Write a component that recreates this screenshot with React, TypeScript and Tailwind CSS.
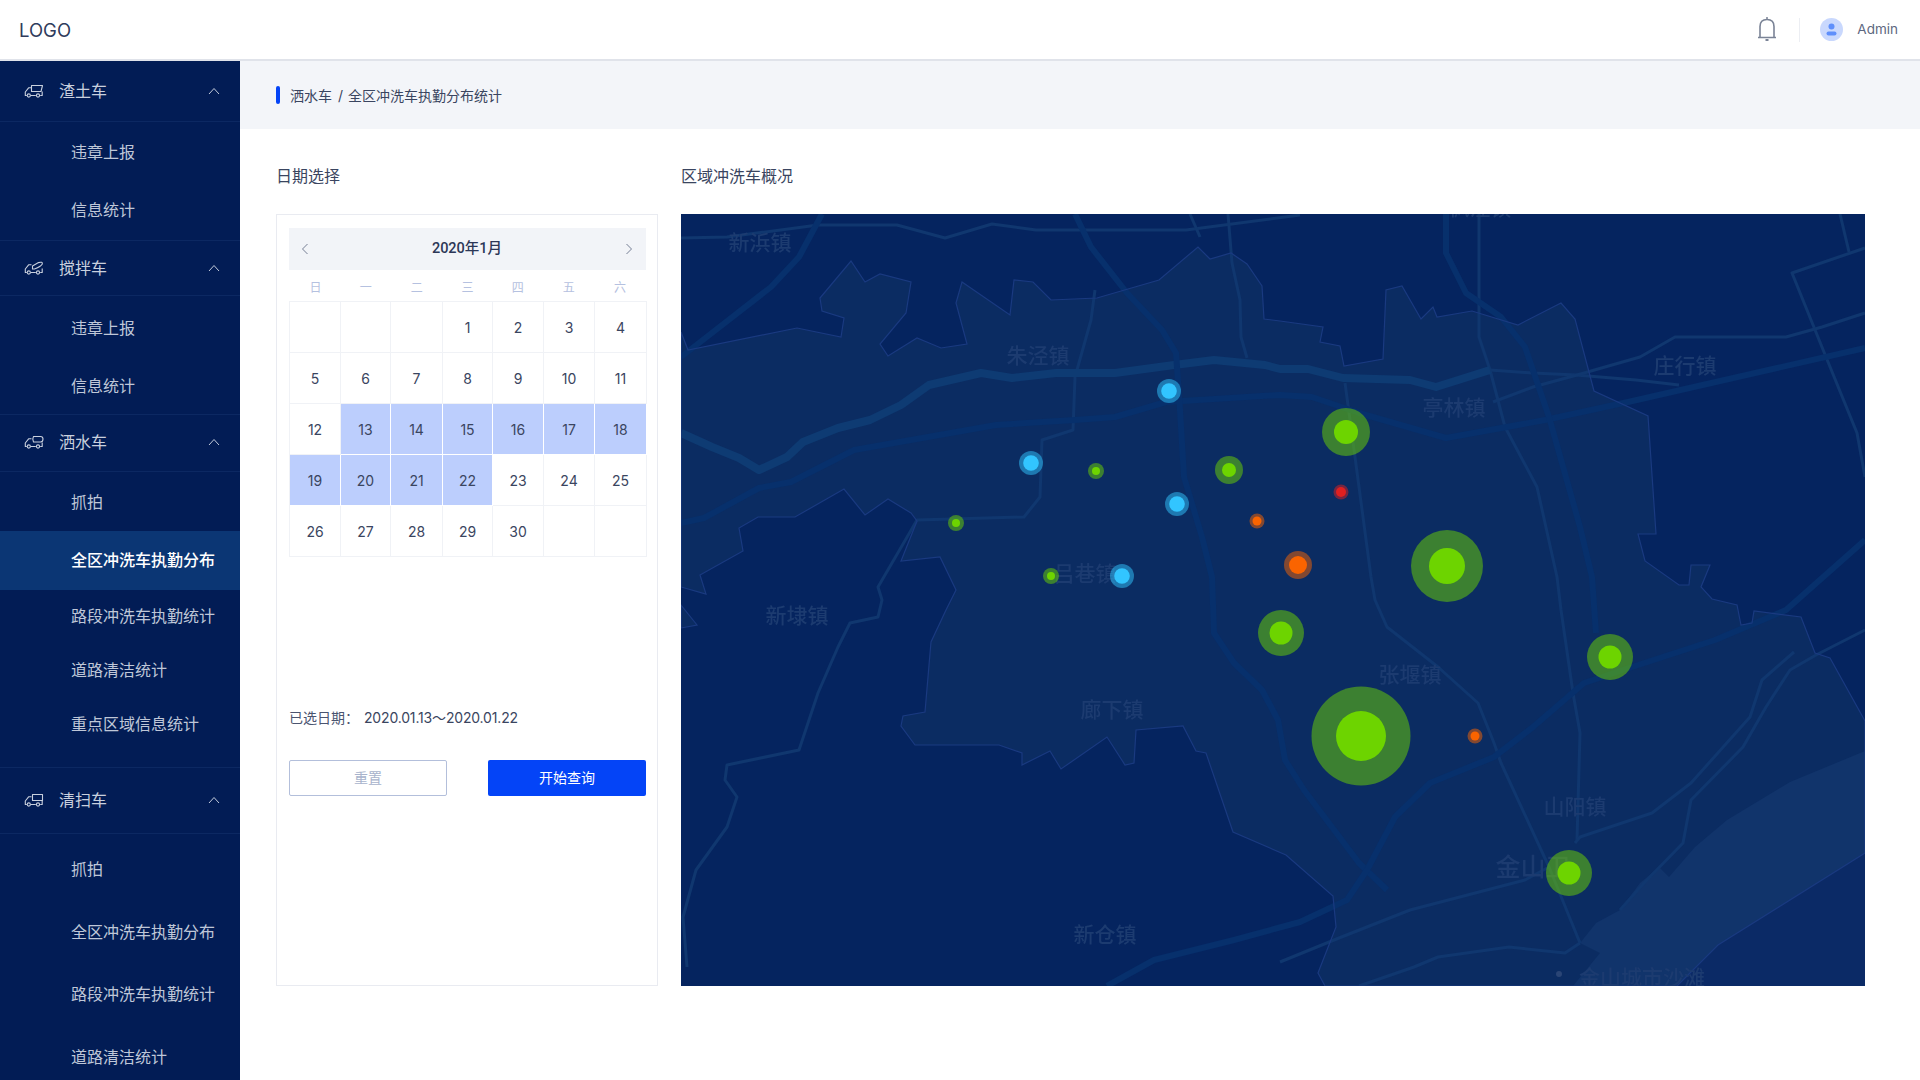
import React from "react";

const sans = "[font-family:Inter,'Noto_Sans_CJK_SC',sans-serif]";

function Truck({ v }: { v: number }) {
  const box =
    v === 1
      ? "M7.5 1.5 H18.5 L17 7.5 H7.5 Z"
      : v === 2
        ? "M8.5 5 L14.5 1.6 Q18.8 0.4 18.3 3 Q17 5.5 10.5 8 H8.5 Z"
        : v === 3
          ? "M9.5 1.5 H16.5 Q19 1.5 19 4 Q19 7 16.5 7 H9.5 Q8 4 9.5 1.5 Z"
          : "M8.5 1.5 H18.5 V7.5 H8.5 Z";
  return (
    <svg width="20" height="14" viewBox="0 0 20 14" fill="none" stroke="#c9d0de" strokeWidth="1.1" strokeLinejoin="round">
      <path d={box} />
      <path d="M7.5 3.8 H4.6 L1.3 8 V11.5 H2.8" />
      <path d="M6.8 11.5 H11.8 M16.2 11.5 H18.2 V7.5" />
      <circle cx="4.8" cy="11.5" r="1.6" />
      <circle cx="14" cy="11.5" r="1.6" />
    </svg>
  );
}

function GroupHead({ label, v, cls }: { label: string; v: number; cls: string }) {
  return (
    <div className={`flex items-center border-b border-[#0c2862] pl-[24px] pr-[20px] text-[16px] text-[#c9d0de] ${cls}`}>
      <span className="flex w-[35px] shrink-0 items-center"><Truck v={v} /></span>
      <span className="flex-1">{label}</span>
      <svg width="12" height="8" viewBox="0 0 12 8" fill="none" stroke="#c3cbdb" strokeWidth="1">
        <path d="M1 7 L6 1.5 L11 7" />
      </svg>
    </div>
  );
}

function Sub({ label, cls, active }: { label: string; cls: string; active?: boolean }) {
  return (
    <div className={`flex items-center pl-[71px] text-[16px] ${active ? "bg-[#0b3674] font-medium text-white" : "text-[#bfc7d8]"} ${cls}`}>
      {label}
    </div>
  );
}

function Sidebar() {
  return (
    <aside className="h-[1019px] w-[240px] shrink-0 overflow-hidden bg-[#021c55]">
      <GroupHead label="渣土车" v={1} cls="h-[61px] pb-[1px]" />
      <div className="border-b border-[#0c2862] pb-[2px]">
        <Sub label="违章上报" cls="h-[60px]" />
        <Sub label="信息统计" cls="h-[56px]" />
      </div>
      <GroupHead label="搅拌车" v={2} cls="h-[55px] pb-[1px]" />
      <div className="border-b border-[#0c2862] pt-[3px]">
        <Sub label="违章上报" cls="h-[57px]" />
        <Sub label="信息统计" cls="mt-[1px] h-[57px]" />
      </div>
      <GroupHead label="洒水车" v={3} cls="h-[57px] pb-[2px]" />
      <div className="border-b border-[#0c2862] pb-[16px]">
        <Sub label="抓拍" cls="h-[59px]" />
        <Sub label="全区冲洗车执勤分布" cls="h-[59px] pb-[2px]" active />
        <Sub label="路段冲洗车执勤统计" cls="h-[53px] pb-[2px]" />
        <Sub label="道路清洁统计" cls="h-[54px]" />
        <Sub label="重点区域信息统计" cls="h-[54px]" />
      </div>
      <GroupHead label="清扫车" v={4} cls="h-[66px] pb-[2px]" />
      <div className="pt-[4px]">
        <Sub label="抓拍" cls="h-[62px]" />
        <Sub label="全区冲洗车执勤分布" cls="h-[63px]" />
        <Sub label="路段冲洗车执勤统计" cls="h-[62px]" />
        <Sub label="道路清洁统计" cls="h-[63px]" />
      </div>
    </aside>
  );
}

function Header() {
  return (
    <header className="flex h-[61px] items-center border-b-2 border-[#e0e3ea] bg-white pl-[19px] pr-[22px]">
      <span className="flex-1 pt-[3px] text-[18.5px] text-[#2f3b5c]">LOGO</span>
      <svg width="20" height="26" viewBox="0 0 20 26" fill="none" stroke="#7a8396" strokeWidth="1.6" className="mr-[22px]">
        <path d="M1 20.5 H19 M3 20.5 V9.5 Q3 2.5 10 2.5 Q17 2.5 17 9.5 V20.5" />
        <path d="M9 1 H11" />
        <path d="M8.5 23 H11.5" strokeWidth="2" />
      </svg>
      <span className="mr-[20px] h-[24px] w-[1px] bg-[#eceef3]" />
      <svg width="23" height="23" viewBox="0 0 23 23" className="mr-[14px]">
        <circle cx="11.5" cy="11.5" r="11.5" fill="#c9d8fd" />
        <circle cx="11.5" cy="8.6" r="3" fill="#5f8ffb" />
        <rect x="6.5" y="13.5" width="10" height="4" rx="2" fill="#5f8ffb" />
      </svg>
      <span className="text-[13.5px] text-[#5d6780]">Admin</span>
    </header>
  );
}

const weekdays = ["日", "一", "二", "三", "四", "五", "六"];
const colW = ["w-[51px]", "w-[50px]", "w-[52px]", "w-[50px]", "w-[51px]", "w-[51px]", "w-[52px]"];

function Calendar() {
  const cells: (number | null)[] = [null, null, null];
  for (let i = 1; i <= 30; i++) cells.push(i);
  cells.push(null, null);
  return (
    <div className="h-[772px] w-[382px] border border-[#e9ebf1] pl-[12px] pr-[11px] pt-[13px]">
      <div className="flex h-[42px] items-center justify-between bg-[#f2f4f8] pl-[12px] pr-[13px]">
        <svg width="8" height="12" viewBox="0 0 8 12" fill="none" stroke="#767f95" strokeWidth="1"><path d="M6.5 1 L1.5 6 L6.5 11" /></svg>
        <span className="text-[14.5px] font-medium text-[#2c3757] [font-family:Roboto,'Noto_Sans_CJK_SC',sans-serif]">2020年1月</span>
        <svg width="8" height="12" viewBox="0 0 8 12" fill="none" stroke="#767f95" strokeWidth="1"><path d="M1.5 1 L6.5 6 L1.5 11" /></svg>
      </div>
      <div className="flex h-[31px] items-center pl-[1px] pt-[4px]">
        {weekdays.map((d, i) => (
          <span key={d} className={`text-center text-[12px] text-[#b5c1e0] ${colW[i]}`}>{d}</span>
        ))}
      </div>
      <div className="grid w-[358px] grid-cols-[51px_50px_52px_50px_51px_51px_52px] grid-rows-[repeat(5,51px)] border-l border-t border-[#f0f2f6]">
        {cells.map((c, i) => {
          const sel = c !== null && c >= 13 && c <= 22;
          return (
            <div
              key={i}
              className={`flex items-center justify-center border-b border-r text-[14px] text-[#3a4560] ${sel ? "border-white bg-[#bccefd]" : "border-[#f0f2f6]"}`}
            >
              {c}
            </div>
          );
        })}
      </div>
      <div className="mt-[150px] flex h-[20px] items-center text-[14px]">
        <span className="w-[75px] text-[#4a5470]">已选日期：</span>
        <span className="tracking-[-0.17px] text-[#3a4560]">2020.01.13～2020.01.22</span>
      </div>
      <div className="mt-[33px] flex justify-between">
        <button className="h-[36px] w-[158px] rounded-[2px] border border-[#b3bfdb] bg-white pb-[2px] text-[14px] text-[#a8b3cc]">重置</button>
        <button className="h-[36px] w-[158px] rounded-[2px] bg-[#0444f7] pb-[2px] text-[14px] text-white">开始查询</button>
      </div>
    </div>
  );
}

const district =
  "681,332 688,350 797,328 841,337 844,318 822,311 820,298 851,261 865,282 880,274 911,282 906,313 880,344 888,356 917,338 941,348 967,344 956,303 962,282 1010,315 1014,280 1033,282 1051,300 1097,298 1159,280 1198,247 1210,259 1231,253 1247,264 1262,286 1264,319 1280,321 1323,327 1320,342 1340,346 1344,366 1383,359 1386,290 1402,286 1421,319 1433,307 1437,317 1472,311 1518,325 1561,303 1575,319 1594,391 1648,416 1656,534 1638,534 1645,561 1679,585 1689,585 1691,565 1710,565 1701,587 1712,599 1737,605 1741,625 1752,623 1754,611 1801,617 1815,653 1830,658 1865,721 1865,853 1718,945 1677,986 1325,986 1318,973 1336,927 1333,896 1286,855 1233,832 1206,753 1196,751 1183,726 1136,730 1134,763 1125,765 1107,737 1061,769 1050,751 1022,765 1022,753 999,745 915,745 901,726 903,716 925,712 931,642 946,610 956,590 940,557 901,561 917,521 911,513 888,499 865,515 844,489 795,517 758,517 739,528 743,551 700,575 706,594 681,587";
const river =
  "1865,751 1790,782 1727,820 1695,847 1669,877 1659,867 1640,883 1620,910 1596,923 1580,943 1600,953 1573,986 1677,986 1718,945 1865,853";

const darkRoads = [
  "681,523 704,518 759,488 791,482 854,450 996,425 1075,420 1115,417 1166,402 1280,395 1312,397 1359,413 1446,438 1545,420 1628,402 1865,348",
  "1075,214 1091,247 1127,293 1162,330 1176,353 1180,410 1184,477 1202,537 1212,577 1214,633 1234,663 1262,690 1278,720 1285,760 1304,790 1359,863 1387,890",
  "1446,214 1446,253 1466,293 1501,317 1525,347 1549,417 1580,527 1592,577 1596,633",
  "1107,986 1154,960 1234,940 1300,922 1347,900 1367,870 1395,817 1430,783 1494,757 1533,727 1584,683 1632,667 1715,640 1786,610 1865,540",
  "822,214 799,257 771,287 681,357",
];
const lightRoads = [
  "1490,370 1533,373 1576,375 1636,380 1679,385",
  "1479,214 1479,337 1490,370 1505,427 1537,487 1557,577 1561,610 1573,693 1580,733 1577,840",
  "1280,962 1339,938 1410,910 1525,880 1549,867",
  "1345,383 1355,457 1371,577 1375,600 1387,627 1438,667 1478,703 1494,743 1501,763 1549,867 1580,943",
  "1359,986 1414,967 1438,957 1509,947 1565,953 1580,943",
  "1794,652 1762,680 1750,717 1691,783 1652,813 1580,837 1575,843",
  "1865,630 1816,655 1790,670 1766,707 1743,747 1691,800 1683,843 1644,883 1620,910",
  "1865,248 1792,273 1826,357 1857,433 1865,477",
  "1840,214 1849,252",
  "1865,313 1822,327 1786,337 1675,337 1640,357 1577,375 1533,387 1493,402",
  "681,238 727,237 818,225 897,225 945,238 992,224 1036,230 1186,230 1300,215",
  "1190,214 1200,237",
  "1228,214 1232,263 1240,300 1241,337 1247,358",
  "1095,290 1091,320 1075,377 1073,430 1042,440 1040,497 1024,517 917,520 878,587 882,600 878,617 850,623 838,647 818,693 799,750 727,765 725,780 737,797 727,827 696,870 683,917 687,967",
];
const canal =
  "681,433 712,447 739,458 759,470 787,457 803,442 838,428 870,420 901,405 929,385 981,373 1012,378 1056,373 1115,373 1174,365 1214,360 1265,365 1280,369 1308,369 1343,378 1410,380 1436,387 1490,370";

const labels: [string, number, number, number][] = [
  ["新浜镇", 760, 242, 21],
  ["朱泾镇", 1038, 355, 21],
  ["亭林镇", 1454, 407, 21],
  ["庄行镇", 1685, 365, 21],
  ["吕巷镇", 1085, 573, 21],
  ["新埭镇", 797, 615, 21],
  ["廊下镇", 1112, 709, 21],
  ["新仓镇", 1105, 934, 21],
  ["张堰镇", 1410, 674, 21],
  ["山阳镇", 1575, 806, 21],
  ["金山卫", 1533, 867, 25],
  ["金山城市沙滩", 1642, 977, 21],
  ["枫泾镇", 1480, 207, 21],
];

const GREEN = "#6dd400";
const BLUE = "#32c5ff";
const ORANGE = "#fa6400";
const RED = "#e02020";
const dots: [number, number, number, number, string][] = [
  [1169, 391, 12, 7.8, BLUE],
  [1031, 463, 12, 7.8, BLUE],
  [1177, 504, 12, 7.8, BLUE],
  [1122, 576, 12, 7.8, BLUE],
  [1096, 471, 8, 4, GREEN],
  [956, 523, 8, 4, GREEN],
  [1051, 576, 8, 4, GREEN],
  [1229, 470, 14, 7, GREEN],
  [1257, 521, 7.5, 4.5, ORANGE],
  [1298, 565, 14, 9, ORANGE],
  [1341, 492, 7.5, 5, RED],
  [1346, 432, 24, 12, GREEN],
  [1447, 566, 36, 18, GREEN],
  [1281, 633, 23, 11.5, GREEN],
  [1361, 736, 49.5, 25, GREEN],
  [1610, 657, 23, 11.5, GREEN],
  [1569, 873, 23, 11.5, GREEN],
  [1475, 736, 7.5, 4.5, ORANGE],
];

function MapView() {
  return (
    <svg width="1184" height="772" viewBox="681 214 1184 772" className="block shrink-0 bg-[#05245f]">
      <polygon points={district} fill="#0b2c62" />
      <polygon points="1865,853 1718,945 1677,986 1865,986" fill="#0b2a66" />
      <polygon points="681,605 697,625 681,628" fill="#0b2c62" stroke="#1a3a80" strokeWidth="1.2" />
      <polygon points={river} fill="#11346b" />
      <g className="blur-[0.5px]" fill="none" strokeLinejoin="round">
        <g stroke="#10376f" strokeWidth="3">
          {lightRoads.map((p, i) => <polyline key={i} points={p} />)}
        </g>
        <polyline points={canal} stroke="#0e3b73" strokeWidth="8" />
        <g stroke="#07306c" strokeWidth="6">
          {darkRoads.map((p, i) => <polyline key={i} points={p} />)}
        </g>
      </g>
      <polygon points={district} fill="none" stroke="#1a3a80" strokeWidth="1.2" />
      <circle cx="1559" cy="974" r="3" fill="#2a4575" />
      <g className="blur-[0.7px]" fill="#1c3b70" textAnchor="middle" dominantBaseline="central">
        {labels.map(([t, x, y, s]) => (
          <text key={t} x={x} y={y} fontSize={s} fontWeight={500}>{t}</text>
        ))}
      </g>
      {dots.map(([x, y, r, ir, c], i) => (
        <g key={i}>
          <circle cx={x} cy={y} r={r} fill={c} fillOpacity={0.5} />
          <circle cx={x} cy={y} r={ir} fill={c} />
        </g>
      ))}
    </svg>
  );
}

export default function App() {
  return (
    <div className={`h-[1080px] w-[1920px] overflow-hidden bg-white ${sans}`}>
      <Header />
      <div className="flex">
        <Sidebar />
        <main className="flex-1">
          <div className="flex h-[68px] items-center bg-[#f3f5f9] pl-[36px] text-[14px] text-[#3a4560]">
            <span className="mr-[10px] h-[18px] w-[4px] rounded-[2px] bg-[#0444f7]" />
            <span>洒水车</span>
            <span className="ml-[6px] mr-[5px]">/</span>
            <span>全区冲洗车执勤分布统计</span>
          </div>
          <div className="flex gap-[23px] pl-[36px] pt-[32px]">
            <section>
              <h2 className="mb-[23px] h-[30px] text-[16px] leading-[30px] text-[#3a4560]">日期选择</h2>
              <Calendar />
            </section>
            <section>
              <h2 className="mb-[23px] h-[30px] text-[16px] leading-[30px] text-[#3a4560]">区域冲洗车概况</h2>
              <MapView />
            </section>
          </div>
        </main>
      </div>
    </div>
  );
}
